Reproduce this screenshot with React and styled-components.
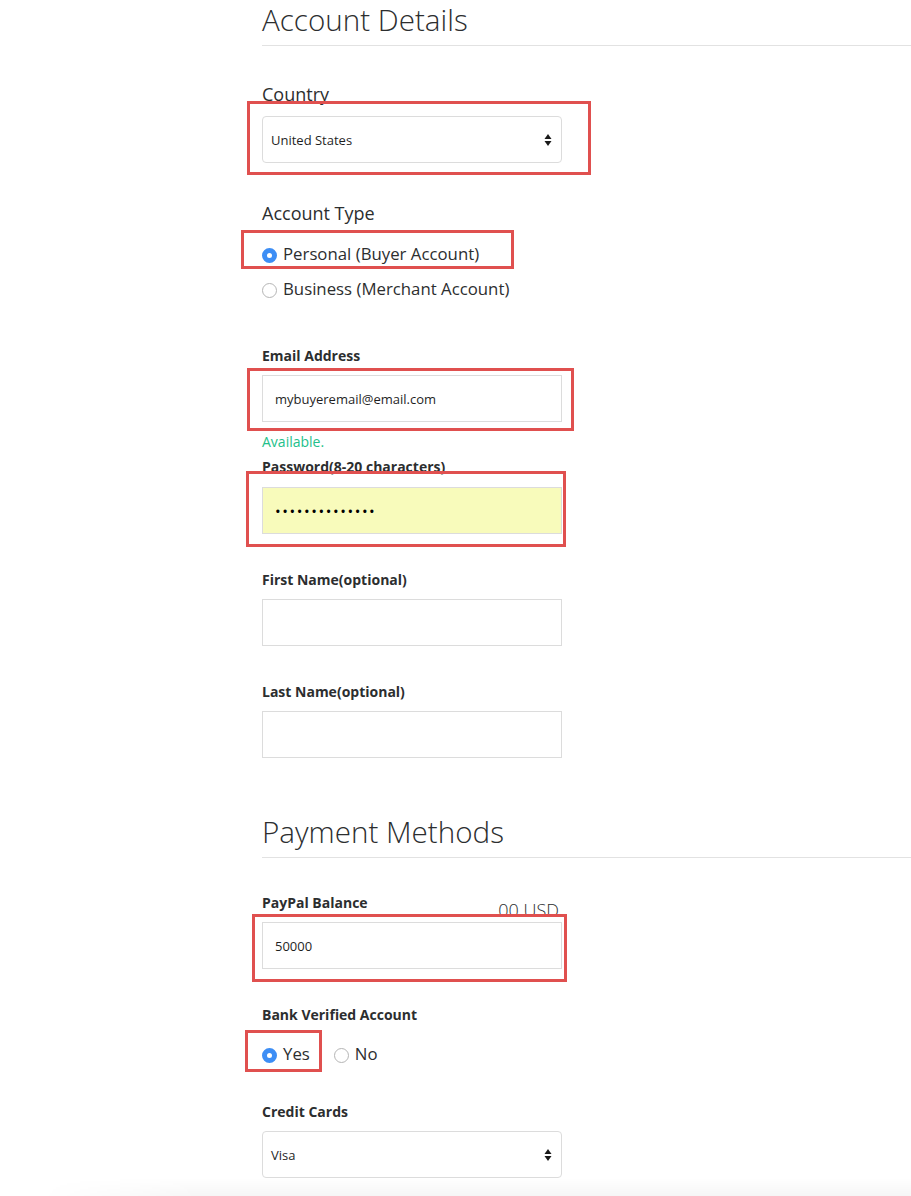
import React from 'react';
import styled, { createGlobalStyle } from 'styled-components';

const GlobalStyle = createGlobalStyle`
  html, body {
    margin: 0;
    padding: 0;
    background: #fff;
  }
  body {
    font-family: "Open Sans", "Noto Sans", Arial, sans-serif;
    color: #2c2e2f;
  }
`;

const Page = styled.div`
  position: relative;
  width: 911px;
  height: 1196px;
  overflow: hidden;
  padding-left: 262px;
  box-sizing: border-box;
`;

const SectionTitle = styled.h2`
  margin: ${(p) => (p.$first ? '0' : '54px 0 0')};
  padding-bottom: 5px;
  border-bottom: 1px solid #e2e2e2;
  font-size: 29.6px;
  font-weight: 300;
  line-height: 40px;
  color: #2c2e2f;
  margin-right: -20px;
`;

const GroupTitle = styled.div`
  margin-top: ${(p) => p.$top || 36}px;
  font-size: 18px;
  line-height: 24px;
  font-weight: 400;
`;

const Label = styled.div`
  margin-top: ${(p) => p.$top ?? 36}px;
  font-size: 14px;
  line-height: 20px;
  font-weight: 700;
`;

const LabelRow = styled.div`
  display: flex;
  justify-content: space-between;
  align-items: flex-end;
  width: 297px;
  margin-top: 35px;
`;

const Currency = styled.span`
  font-size: 18px;
  font-weight: 300;
  line-height: 20px;
  position: relative;
  top: 7px;
  color: #2c2e2f;
`;

const Field = styled.div`
  box-sizing: border-box;
  width: 300px;
  height: 47px;
  margin-top: ${(p) => p.$top ?? 9}px;
  border: 1px solid #dcdcdc;
  border-radius: ${(p) => (p.$select ? '4px' : '0')};
  background: ${(p) => (p.$autofill ? '#f8fbbb' : '#fff')};
  display: flex;
  align-items: center;
  justify-content: space-between;
  padding: ${(p) => (p.$select ? '0 9px 0 8px' : '0 12px')};
  font-size: 13px;
  color: #1f1f1f;
`;

const Dots = styled.span`
  font-size: 15px;
  letter-spacing: 1.6px;
  color: #000;
`;

const Hint = styled.div`
  margin-top: 10px;
  font-size: 14px;
  line-height: 20px;
  color: #22c08a;
`;

const RadioGroup = styled.div`
  display: flex;
  flex-direction: ${(p) => (p.$inline ? 'row' : 'column')};
  gap: ${(p) => (p.$inline ? '24px' : '11px')};
  margin-top: 17px;
`;

const RadioOption = styled.label`
  display: flex;
  align-items: center;
  gap: 6px;
  font-size: 16.8px;
  line-height: 24px;
`;

const RadioDot = styled.span`
  box-sizing: border-box;
  width: 15px;
  height: 15px;
  margin-top: 2px;
  border-radius: 50%;
  border: ${(p) => (p.$checked ? '5px solid #3d8ef5' : '1px solid #b5b5b5')};
  background: #fff;
  flex-shrink: 0;
`;

const Highlight = styled.div`
  position: absolute;
  border: 3px solid #e0504f;
  box-sizing: border-box;
  pointer-events: none;
`;

const BottomShade = styled.div`
  position: absolute;
  left: 0;
  right: 0;
  bottom: 0;
  height: 18px;
  background: linear-gradient(to bottom, rgba(0, 0, 0, 0), rgba(0, 0, 0, 0.035));
  -webkit-mask-image: linear-gradient(to right, transparent 40px, #000 200px);
  mask-image: linear-gradient(to right, transparent 40px, #000 200px);
`;

const SelectArrows = () => (
  <svg width="8" height="12" viewBox="0 0 8 12">
    <path d="M4 0 L7.5 5 H0.5 Z" fill="#1a1a1a" />
    <path d="M4 12 L7.5 7 H0.5 Z" fill="#1a1a1a" />
  </svg>
);

const boxes = [
  { left: 247, top: 101, width: 344, height: 74 },
  { left: 241, top: 230, width: 273, height: 39 },
  { left: 247, top: 368, width: 327, height: 63 },
  { left: 246, top: 471, width: 320, height: 76 },
  { left: 252, top: 914, width: 315, height: 68 },
  { left: 245, top: 1030, width: 77, height: 42 },
];

export default function App() {
  return (
    <>
      <GlobalStyle />
      <Page>
        <SectionTitle $first>Account Details</SectionTitle>

        <GroupTitle $top={36}>Country</GroupTitle>
        <Field $select $top={10}>
          <span>United States</span>
          <SelectArrows />
        </Field>

        <GroupTitle $top={38}>Account Type</GroupTitle>
        <RadioGroup>
          <RadioOption>
            <RadioDot $checked />
            Personal (Buyer Account)
          </RadioOption>
          <RadioOption>
            <RadioDot />
            Business (Merchant Account)
          </RadioOption>
        </RadioGroup>

        <Label $top={45}>Email Address</Label>
        <Field>mybuyeremail@email.com</Field>
        <Hint>Available.</Hint>

        <Label $top={5}>Password(8-20 characters)</Label>
        <Field $autofill $top={10}>
          <Dots>••••••••••••••</Dots>
        </Field>

        <Label>First Name(optional)</Label>
        <Field />

        <Label>Last Name(optional)</Label>
        <Field />

        <SectionTitle>Payment Methods</SectionTitle>

        <LabelRow>
          <Label $top={0}>PayPal Balance</Label>
          <Currency>00 USD</Currency>
        </LabelRow>
        <Field>50000</Field>

        <Label>Bank Verified Account</Label>
        <RadioGroup $inline>
          <RadioOption>
            <RadioDot $checked />
            Yes
          </RadioOption>
          <RadioOption>
            <RadioDot />
            No
          </RadioOption>
        </RadioGroup>

        <Label>Credit Cards</Label>
        <Field $select>
          <span>Visa</span>
          <SelectArrows />
        </Field>

        {boxes.map((b, i) => (
          <Highlight key={i} style={b} />
        ))}
        <BottomShade />
      </Page>
    </>
  );
}
